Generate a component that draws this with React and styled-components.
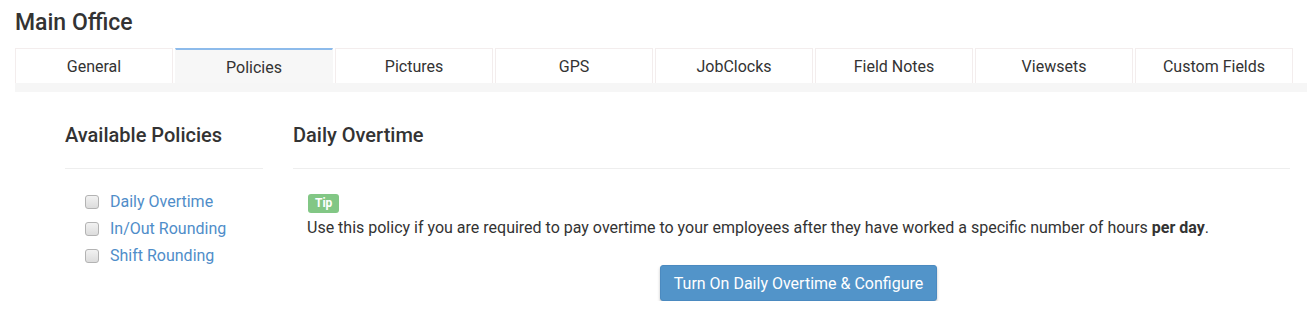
import React, { useState } from "react";
import styled, { createGlobalStyle } from "styled-components";

const GlobalStyle = createGlobalStyle`
  html, body {
    margin: 0;
    padding: 0;
    background: #fff;
    font-family: Roboto, "Liberation Sans", Arial, sans-serif;
    color: #333;
  }
`;

const Page = styled.div`
  padding: 9px 0 0 15px;
`;

const Title = styled.h2`
  margin: 0 0 11px 0;
  font-size: 23px;
  font-weight: 500;
  line-height: 28px;
  color: #333;
`;

const TabBar = styled.div`
  display: flex;
  gap: 2px;
  padding-right: 14px;
  background: linear-gradient(to bottom, #fff 0, #fff 35px, #f6f6f6 35px);
  height: 44px;
`;

const Tab = styled.div`
  width: 158px;
  height: 35px;
  box-sizing: border-box;
  display: flex;
  align-items: center;
  justify-content: center;
  font-size: 16px;
  color: #333;
  cursor: pointer;
  background: ${(p) => (p.$active ? "#f7f7f7" : "#fff")};
  border: 1px solid ${(p) => (p.$active ? "#f7f7f7" : "#f3eded")};
  border-bottom: none;
  border-top: ${(p) => (p.$active ? "2px solid #8dbbeb" : "1px solid #f3eded")};
  padding-top: ${(p) => (p.$active ? "1px" : "0")};
`;

const Body = styled.div`
  display: flex;
  padding: 26px 17px 0 50px;
  gap: 30px;
`;

const Sidebar = styled.div`
  width: 198px;
  flex-shrink: 0;
`;

const Main = styled.div`
  flex: 1;
`;

const SectionTitle = styled.h3`
  margin: 0;
  font-size: 20px;
  font-weight: 500;
  line-height: 34px;
  padding-bottom: 16px;
  border-bottom: 1px solid #eee;
  color: #333;
`;

const PolicyList = styled.div`
  padding: 19px 0 0 20px;
  display: flex;
  flex-direction: column;
`;

const PolicyRow = styled.label`
  display: flex;
  align-items: center;
  height: 27px;
  gap: 11px;
  cursor: pointer;
`;

const Box = styled.span`
  width: 14px;
  height: 14px;
  box-sizing: border-box;
  border: 1px solid #b3b3b3;
  border-radius: 3px;
  background: linear-gradient(#f2f2f2, #dcdcdc);
`;

const PolicyLink = styled.span`
  font-size: 16px;
  color: #4f8dc9;
`;

const Content = styled.div`
  padding: 25px 0 0 14px;
`;

const Badge = styled.span`
  display: block;
  width: fit-content;
  background: #82c785;
  color: #fff;
  font-size: 12px;
  font-weight: 700;
  line-height: 19px;
  padding: 0 7px;
  border-radius: 3px;
  margin-left: 1px;
`;

const Text = styled.p`
  margin: 4px 0 0 0;
  font-size: 16px;
  line-height: 22px;
  color: #333;
`;

const ButtonRow = styled.div`
  display: flex;
  justify-content: center;
  padding-top: 26px;
`;

const PrimaryButton = styled.button`
  background: #5294c9;
  color: #fff;
  border: 1px solid #4b8ac0;
  border-radius: 3px;
  font-family: Roboto, "Liberation Sans", Arial, sans-serif;
  font-size: 16px;
  height: 36px;
  padding: 0 13px;
  box-shadow: 0 2px 3px rgba(0, 0, 0, 0.25);
  cursor: pointer;
`;

const tabs = [
  "General",
  "Policies",
  "Pictures",
  "GPS",
  "JobClocks",
  "Field Notes",
  "Viewsets",
  "Custom Fields",
];

const policies = ["Daily Overtime", "In/Out Rounding", "Shift Rounding"];

const App = () => {
  const [active, setActive] = useState("Policies");

  return (
    <>
      <GlobalStyle />
      <Page>
        <Title>Main Office</Title>
        <TabBar>
          {tabs.map((t) => (
            <Tab key={t} $active={t === active} onClick={() => setActive(t)}>
              {t}
            </Tab>
          ))}
        </TabBar>
        <Body>
          <Sidebar>
            <SectionTitle>Available Policies</SectionTitle>
            <PolicyList>
              {policies.map((p) => (
                <PolicyRow key={p}>
                  <Box />
                  <PolicyLink>{p}</PolicyLink>
                </PolicyRow>
              ))}
            </PolicyList>
          </Sidebar>
          <Main>
            <SectionTitle>Daily Overtime</SectionTitle>
            <Content>
              <Badge>Tip</Badge>
              <Text>
                Use this policy if you are required to pay overtime to your
                employees after they have worked a specific number of hours{" "}
                <b>per day</b>.
              </Text>
              <ButtonRow>
                <PrimaryButton>Turn On Daily Overtime &amp; Configure</PrimaryButton>
              </ButtonRow>
            </Content>
          </Main>
        </Body>
      </Page>
    </>
  );
};

export default App;
